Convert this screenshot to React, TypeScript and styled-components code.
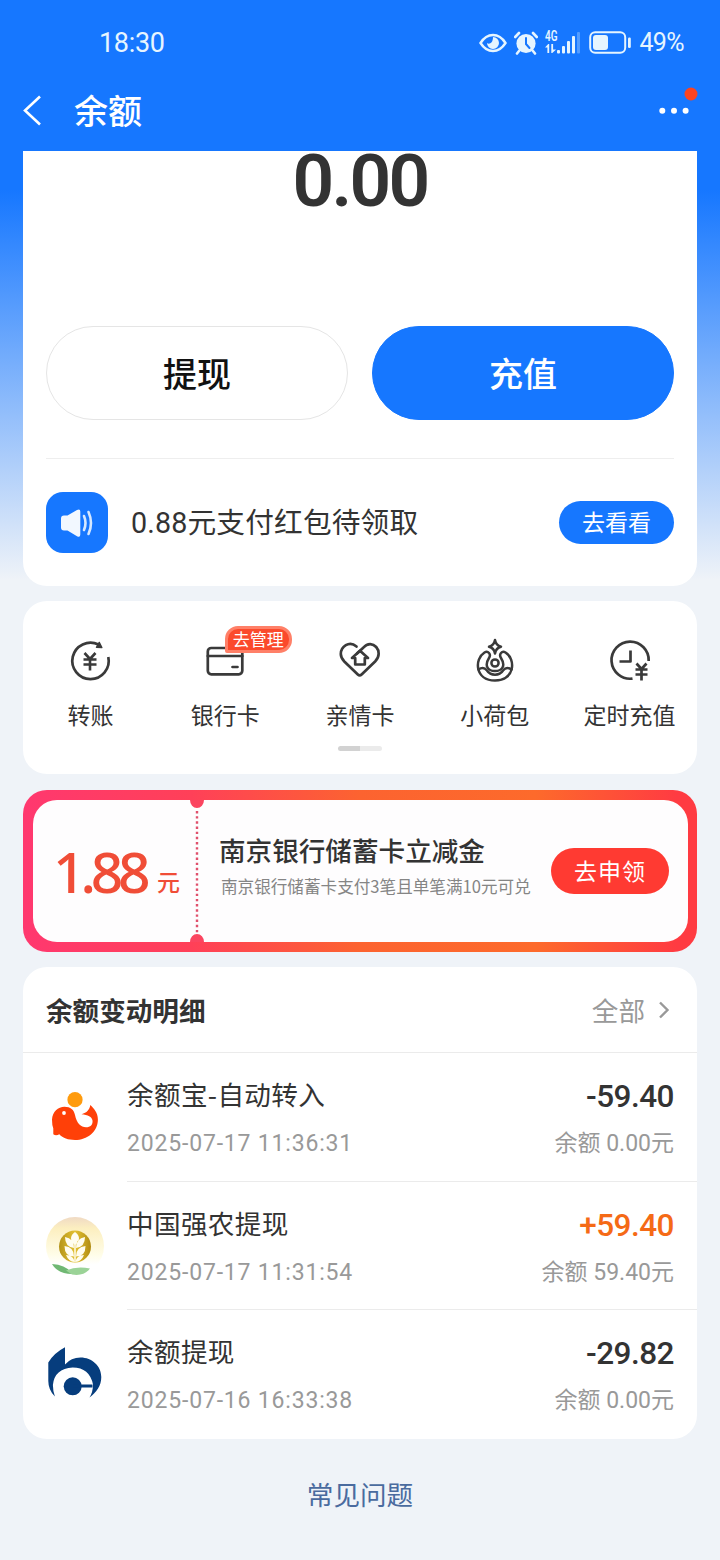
import React from 'react';
import styled, { createGlobalStyle } from 'styled-components';

const Global = createGlobalStyle`
  * { box-sizing: border-box; }
  body { margin: 0; background: #eff3f8; }
`;

const cjk = `'Noto Sans CJK SC', sans-serif`;
const digits = `Roboto, 'Noto Sans CJK SC', sans-serif`;

const Page = styled.div`
  width: 720px;
  height: 1560px;
  overflow: hidden;
  font-family: ${cjk};
  color: #333;
  background: linear-gradient(180deg, #1677ff 0, #1677ff 190px, #eff3f8 580px, #eff3f8 100%);
`;

const StatusBar = styled.div`
  height: 70px;
  padding: 15px 36px 0 99px;
  display: flex;
  align-items: center;
  justify-content: space-between;
  color: #e6f5ff;
  font: 400 27px/54px ${digits};
`;

const Clock = styled.span`
  letter-spacing: -0.3px;
`;

const StatusIcons = styled.div`
  display: flex;
  align-items: center;
`;

const Percent = styled.span`
  margin-left: 7px;
  font-size: 25px;
  letter-spacing: -0.6px;
`;

const NavBar = styled.div`
  height: 81px;
  padding: 0 20px 0 22px;
  display: flex;
  align-items: center;
  color: #fff;
`;

const NavTitle = styled.h1`
  margin: -1px auto 0 31px;
  font-size: 34px;
  font-weight: 500;
  line-height: 50px;
`;

const Main = styled.main`
  padding: 0 23px;
  display: flex;
  flex-direction: column;
`;

const Card = styled.section`
  background: #fff;
  border-radius: 24px;
`;

const BalanceCard = styled(Card)`
  height: 435px;
  border-radius: 0 0 24px 24px;
  padding: 0 23px;
`;

const Amount = styled.div`
  height: 175px;
  text-align: center;
  font: 600 73px/60px ${digits};
  letter-spacing: -2.7px;
`;

const Actions = styled.div`
  display: grid;
  grid-template-columns: 1fr 1fr;
  gap: 24px;
  padding-bottom: 38px;
  border-bottom: 1px solid #eee;
`;

const ActionButton = styled.button<{ $primary?: boolean }>`
  height: 94px;
  border-radius: 47px;
  padding: 0;
  border: 1px solid ${p => (p.$primary ? '#1677ff' : '#e5e5e5')};
  background: ${p => (p.$primary ? '#1677ff' : '#fff')};
  color: ${p => (p.$primary ? '#fff' : '#111')};
  font: 500 34px/48px ${cjk};
`;

const Notice = styled.div`
  display: flex;
  align-items: center;
  height: 127px;
`;

const NoticeIcon = styled.div`
  width: 62px;
  height: 61px;
  border-radius: 17px;
  background: #1677ff;
  display: grid;
  place-items: center;
  margin-right: 23px;
`;

const NoticeText = styled.span`
  flex: 1;
  font: 400 28.7px/40px ${digits};
  letter-spacing: 0.15px;
`;

const NoticeButton = styled.button`
  width: 115px;
  height: 43px;
  border: 0;
  padding: 0 0 3px;
  border-radius: 22px;
  background: #1677ff;
  color: #fff;
  font: 400 23px/40px ${cjk};
`;

const ServicesCard = styled(Card)`
  margin-top: 15px;
  height: 173px;
  padding-top: 34px;
`;

const ServiceGrid = styled.div`
  display: grid;
  grid-template-columns: repeat(5, 134.8px);
`;

const Service = styled.div`
  position: relative;
  display: flex;
  flex-direction: column;
  align-items: center;
  height: 110px;
`;

const ServiceLabel = styled.span`
  margin-top: 10px;
  font-size: 23px;
  line-height: 34px;
  white-space: nowrap;
`;

const ManageBadge = styled.span`
  position: absolute;
  left: 67px;
  top: -9px;
  width: 67px;
  height: 27px;
  border: 3px solid #ff8068;
  border-radius: 13px 13px 13px 2px;
  background: #fb4a2c;
  color: #fff;
  text-align: center;
  font-size: 17px;
  line-height: 19px;
`;

const PageIndicator = styled.div`
  width: 44px;
  height: 5px;
  margin: 1px auto 0;
  border-radius: 3px;
  background: linear-gradient(90deg, #d2d2d2 50%, #ebebeb 50%);
`;

const Coupon = styled.section`
  margin-top: 16px;
  height: 162px;
  padding: 10px 9px 10px 10px;
  border-radius: 24px;
  background: linear-gradient(90deg, #ff386f 0%, #ff4058 25%, #fc6330 50%, #fd6a2b 76%, #ff3b42 97%);
`;

const CouponInner = styled.div`
  position: relative;
  height: 142px;
  border-radius: 24px;
  background: #fefdfe;
  display: flex;
  align-items: center;
`;

const CouponValue = styled.div`
  width: 163px;
  padding: 0 0 0 20px;
  display: flex;
  align-items: baseline;
  color: #f04d37;
`;

const CouponNumber = styled.span`
  font: 500 57px/70px 'Noto Sans', sans-serif;
  letter-spacing: -5.2px;
  width: 104px;
`;

const CouponUnit = styled.span`
  position: relative;
  top: -2px;
  font-size: 23px;
  font-weight: 500;
`;

const Perforation = styled.svg`
  position: absolute;
  left: 156px;
  top: 0;
`;

const CouponText = styled.div`
  flex: 1;
  padding-left: 23px;
  white-space: nowrap;
`;

const CouponTitle = styled.div`
  font-size: 26.6px;
  font-weight: 500;
  line-height: 38px;
  margin-top: -12px;
`;

const CouponDesc = styled.div`
  margin: 4px 0 0 2px;
  font-size: 16.6px;
  line-height: 26px;
  color: #858585;
`;

const ApplyButton = styled.button`
  width: 118px;
  height: 46px;
  margin-right: 19px;
  border: 0;
  padding: 0 0 3px;
  border-radius: 23px;
  background: #ff3a32;
  color: #fff;
  font: 400 23px/40px ${cjk};
  letter-spacing: 1px;
`;

const HistoryCard = styled(Card)`
  margin-top: 15px;
  height: 472px;
  overflow: hidden;
`;

const HistoryHeader = styled.div`
  height: 86px;
  padding: 0 26px 0 23px;
  display: flex;
  align-items: center;
  border-bottom: 1px solid #ebebeb;
`;

const HistoryTitle = styled.h2`
  margin: 0 auto 0 0;
  font-size: 26.6px;
  font-weight: 700;
  line-height: 40px;
`;

const AllLink = styled.span`
  display: flex;
  align-items: center;
  gap: 13px;
  color: #999;
  font-size: 26.6px;
  line-height: 40px;
`;

const Entry = styled.div`
  display: grid;
  grid-template-columns: 58px 1fr;
  column-gap: 23px;
  height: 128.7px;
  padding-left: 23px;
`;

const EntryLogo = styled.div`
  padding-top: 35px;
  height: 100px;
`;

const EntryBody = styled.div`
  padding: 20px 23px 0 0;
  border-bottom: 1px solid #ebebeb;

  ${Entry}:last-child & {
    border-bottom: 0;
  }
`;

const EntryLine = styled.div`
  display: flex;
  justify-content: space-between;
`;

const EntryName = styled.span`
  font-size: 26.6px;
  line-height: 42px;
  letter-spacing: 0.35px;
`;

const EntryAmount = styled.span<{ $income?: boolean }>`
  font: 500 31.5px/48px ${digits};
  letter-spacing: -0.5px;
  color: ${p => (p.$income ? '#f56a16' : '#333')};
`;

const EntryTime = styled.span`
  font: 400 23px/46px ${digits};
  letter-spacing: 0.82px;
  color: #999;
`;

const EntryBalance = styled.span`
  font: 400 23px/46px ${digits};
  color: #999;
`;

const Faq = styled.a`
  margin-top: 34px;
  text-align: center;
  color: #4a6b9f;
  font-size: 26.6px;
  line-height: 42px;
`;

const EyeIcon = () => (
  <svg width="28" height="20" viewBox="0 0 28 20" fill="none">
    <path d="M1.500 10C5 4.500 9 2 14 2s9 2.500 12.500 8C23 15.500 19 18 14 18S5 15.500 1.500 10Z" stroke="#e6f5ff" strokeWidth="2.400" />
    <path d="M14 4a6 6 0 1 1-6 6c2 1.600 6 .5 6-6Z" fill="#e6f5ff" />
  </svg>
);

const StatusGlyph = styled.svg`
  margin-left: 7px;
`;

const AlarmIcon = () => (
  <StatusGlyph width="24" height="24" viewBox="0 0 24 24" fill="none">
    <circle cx="12" cy="12.500" r="9.600" fill="#e6f5ff" />
    <path d="M1.200 6 5 2M22.800 6 19 2M5 20l-2 2.500M19 20l2 2.500" stroke="#e6f5ff" strokeWidth="2.600" strokeLinecap="round" />
    <path d="M12 7v6l3.500 4" stroke="#1677ff" strokeWidth="2" strokeLinecap="round" />
  </StatusGlyph>
);

const SignalIcon = () => (
  <StatusGlyph width="36" height="25" viewBox="0 0 36 25" fill="#e6f5ff">
    <text x="0" y="11" fontFamily="Roboto, sans-serif" fontSize="14" fontWeight="600" textLength="12.500" lengthAdjust="spacingAndGlyphs">4G</text>
    <path d="M0 17.500 3.200 14h1v9H2.400v-5.500Zm6.300-3.500h1.800v5.500h3L7.300 23h-1Z" />
    <rect x="12" y="20" width="3" height="3.500" rx="1" />
    <rect x="17" y="16" width="3" height="7.500" rx="1" />
    <rect x="22" y="11" width="3" height="12.500" rx="1" />
    <rect x="27" y="6" width="3" height="17.500" rx="1" />
    <rect x="32" y="2" width="3" height="21.500" rx="1" opacity=".3" />
  </StatusGlyph>
);

const BatteryIcon = () => (
  <StatusGlyph width="44" height="23" viewBox="-1 0 44 23" fill="none">
    <rect x="1.200" y="1.200" width="35" height="20.500" rx="5" stroke="#e6f5ff" strokeWidth="2" />
    <rect x="4" y="4" width="15" height="15" rx="3" fill="#e6f5ff" />
    <rect x="39" y="6.500" width="2.800" height="10.500" rx="1.200" fill="#e6f5ff" />
  </StatusGlyph>
);

const BackIcon = () => (
  <svg width="21" height="32" viewBox="0 0 21 32" fill="none" stroke="#fff" strokeWidth="2.600">
    <path d="M18 1.500 3 15.500l15 14" />
  </svg>
);

const MoreIcon = () => (
  <svg width="44" height="50" viewBox="0 0 44 50" fill="#fff">
    <circle cx="6.300" cy="24.700" r="3" />
    <circle cx="18" cy="24.700" r="3" />
    <circle cx="29.600" cy="24.700" r="3" />
    <circle cx="35" cy="8" r="6.500" fill="#fb4420" />
  </svg>
);

const SpeakerIcon = () => (
  <svg width="36" height="30" viewBox="0 0 36 30" fill="none">
    <path d="M2 10.500q0-3 3-3h3.500L18 2q3.300-1.500 3.300 1.500v23Q21.300 30 18 28.300L8.500 22.500H5q-3 0-3-3Z" fill="#f2f8ff" />
    <path d="M25 8q3 7 0 14M29.500 4q5 11 0 22" stroke="#d6e8ff" strokeWidth="2.600" strokeLinecap="round" />
  </svg>
);

const iconProps = {
  width: 48,
  height: 52,
  viewBox: '0 0 48 52',
  fill: 'none',
  stroke: '#3a3a3a',
  strokeWidth: 2.7,
  strokeLinecap: 'round' as const,
  strokeLinejoin: 'round' as const,
};

const TransferIcon = () => (
  <svg {...iconProps}>
    <path d="M42.300 22A18.200 18.200 0 1 1 32.500 9.500" strokeLinecap="butt" />
    <path d="m33.300 7.500 2.500 5-5.300-.2Z" fill="#3a3a3a" strokeWidth="1.500" />
    <path d="m18.500 18 5.500 6 5.500-6M17.500 24.500h13M17.500 29.500h13M24 24V35.500" strokeWidth="2.600" strokeLinecap="butt" />
  </svg>
);

const CardIcon = () => (
  <svg {...iconProps}>
    <rect x="6.800" y="13" width="34.500" height="26.300" rx="3.500" />
    <path d="M6.800 21h34.500M31.500 32h5" />
  </svg>
);

const HeartIcon = () => (
  <svg {...iconProps}>
    <path d="M20.500 11.500C13 5 4.800 12 4.800 19c0 3 1.300 5.200 3.500 7.500l13.500 13q1.900 1.800 3.800 0l13.500-13C49 16.500 36 2.500 27.500 12.500L21 18.500" />
    <path d="m16 23 8-7.200 8 7.200h-3.200v6.500h-9.600V23Z" />
  </svg>
);

const PouchIcon = () => (
  <svg {...iconProps} strokeWidth={2.5}>
    <path d="M24 5q1 5.500 6 6.800-5 1.200-6 6.700-1-5.500-6-6.700 5-1.300 6-6.800Z" />
    <path d="M13.500 17.500C3 24 4 45.500 24 45.500S45 24 34.500 17.500c-3.500-2-7 1.500-4.500 5.500 5 8 1 13-6 13s-11-5-6-13c2.500-4-1-7.500-4.500-5.500Z" />
    <circle cx="24" cy="28" r="3.600" />
    <path d="M7.500 34.500q5-3.500 8.500 1c3.500 5.500 12.500 5.500 16 0q3.500-4.500 8.500-1" />
  </svg>
);

const TimedIcon = () => (
  <svg {...iconProps}>
    <path d="M26.500 43.600A18.600 18.600 0 1 1 42.700 26M24.500 15.500V26.500H13.500" strokeLinecap="butt" />
    <path d="m30.500 28.500 5 5.500 5-5.500M29.500 34.500h12M29.500 39.500h12M35.500 34v11.500" strokeLinecap="butt" />
  </svg>
);

const ChevronIcon = () => (
  <svg width="13" height="20" viewBox="0 0 13 20" fill="none" stroke="#999" strokeWidth="2.400">
    <path d="m2 2.500 7.500 7.500L2 17.500" />
  </svg>
);

const FishLogo = () => (
  <svg width="58" height="62" viewBox="0 0 58 62">
    <circle cx="29" cy="11.700" r="7.600" fill="#ff9b0d" />
    <path fill="#ff4008" d="M7.300 46.300V40.500Q6 37 6 31.500C6.500 23.500 12 18.700 18.500 18.700c6 0 9.500 3 10.500 8.300 1.500 8 6 12.300 11 12.300 4.500 0 7-2.800 6.500-6.800-.6-3.700-4.500-5.700-11-6.300 5.500-1.400 8-4.500 8.800-9.200 3.500 3.500 7.600 7.500 7.600 14.500C51.900 44 41 52 29 52c-7 0-12-1.700-15.700-5.700-2 1-4 1.300-6 0Z" />
    <circle cx="18" cy="25" r="1.900" fill="#fff" />
  </svg>
);

const WheatLogo = () => (
  <svg width="58" height="60" viewBox="0 0 58 60">
    <defs>
      <linearGradient id="halo" x2="0" y2="1">
        <stop offset="0" stopColor="#f0dac4" />
        <stop offset=".2" stopColor="#fcefc0" />
        <stop offset=".65" stopColor="#fffde8" />
        <stop offset=".82" stopColor="#fff" />
      </linearGradient>
      <linearGradient id="gold">
        <stop offset="0" stopColor="#b4941a" />
        <stop offset=".5" stopColor="#e3c132" />
        <stop offset="1" stopColor="#b18c12" />
      </linearGradient>
    </defs>
    <circle cx="29" cy="29" r="29" fill="url(#halo)" />
    <circle cx="29" cy="29.500" r="16" fill="url(#gold)" />
    <path fill="#fffdf0" d="M29 15q8 6 0 13-8-7 0-13ZM19 20q9 1.500 9 11-9-1-9-11ZM39 20q-9 1.500-9 11 9-1 9-11ZM18.500 29q9.500 1 9.500 10.500-9.500 0-9.500-10.500ZM39.500 29q-9.500 1-9.500 10.500 9.500 0 9.500-10.500ZM20 38q7.500 0 8.500 7-6-.5-8.500-7ZM38 38q-7.500 0-8.500 7 6-.5 8.500-7Z" />
    <path d="M29 25v20" stroke="#fffdf0" strokeWidth="1.500" />
    <path fill="#70b873" d="M6 47q15 1 20 10Q12 57 6 47Z" />
    <path fill="#9bd397" d="M20 53.500q11-5 24-2-6 8-18 6Z" />
  </svg>
);

const BankLogo = () => (
  <svg width="58" height="56" viewBox="0 0 58 56">
    <path fill="#063d7d" d="M2.300 17.500Q8 8 19 2.300V19.500Q25 12.500 34.500 12.500C46 12.500 55.300 21 55.300 32c0 9-4.800 15-11.800 20.500Q47 47 47 39.500 43.500 22.500 26.700 22.500 8.500 23.500 6.900 40q0 6 2 11.500Q2.300 45 2.300 36Z" />
    <circle cx="26.700" cy="41.300" r="9" fill="#063d7d" />
    <path d="M27 41h19.500" stroke="#063d7d" strokeWidth="3.200" />
  </svg>
);

const services = [
  { label: '转账', Icon: TransferIcon },
  { label: '银行卡', Icon: CardIcon, badge: '去管理' },
  { label: '亲情卡', Icon: HeartIcon },
  { label: '小荷包', Icon: PouchIcon },
  { label: '定时充值', Icon: TimedIcon },
];

const entries = [
  { Logo: FishLogo, name: '余额宝-自动转入', time: '2025-07-17 11:36:31', amount: '-59.40', balance: '余额 0.00元' },
  { Logo: WheatLogo, name: '中国强农提现', time: '2025-07-17 11:31:54', amount: '+59.40', balance: '余额 59.40元', income: true },
  { Logo: BankLogo, name: '余额提现', time: '2025-07-16 16:33:38', amount: '-29.82', balance: '余额 0.00元' },
];

export default function App() {
  return (
    <Page>
      <Global />
      <StatusBar>
        <Clock>18:30</Clock>
        <StatusIcons>
          <EyeIcon />
          <AlarmIcon />
          <SignalIcon />
          <BatteryIcon />
          <Percent>49%</Percent>
        </StatusIcons>
      </StatusBar>
      <NavBar>
        <BackIcon />
        <NavTitle>余额</NavTitle>
        <MoreIcon />
      </NavBar>
      <Main>
        <BalanceCard>
          <Amount>0.00</Amount>
          <Actions>
            <ActionButton>提现</ActionButton>
            <ActionButton $primary>充值</ActionButton>
          </Actions>
          <Notice>
            <NoticeIcon><SpeakerIcon /></NoticeIcon>
            <NoticeText>0.88元支付红包待领取</NoticeText>
            <NoticeButton>去看看</NoticeButton>
          </Notice>
        </BalanceCard>
        <ServicesCard>
          <ServiceGrid>
            {services.map(({ label, Icon, badge }) => (
              <Service key={label}>
                <Icon />
                {badge && <ManageBadge>{badge}</ManageBadge>}
                <ServiceLabel>{label}</ServiceLabel>
              </Service>
            ))}
          </ServiceGrid>
          <PageIndicator />
        </ServicesCard>
        <Coupon>
          <CouponInner>
            <CouponValue>
              <CouponNumber>1.88</CouponNumber>
              <CouponUnit>元</CouponUnit>
            </CouponValue>
            <Perforation width="16" height="142" viewBox="0 0 16 142" fill="#fb4560">
              <path d="M1 0a7 8 0 0 0 14 0ZM1 142a7 8 0 0 1 14 0Z" />
              <path d="M8 11v122" stroke="#e0506c" strokeWidth="2.400" strokeDasharray="2.400 2.770" />
            </Perforation>
            <CouponText>
              <CouponTitle>南京银行储蓄卡立减金</CouponTitle>
              <CouponDesc>南京银行储蓄卡支付3笔且单笔满10元可兑</CouponDesc>
            </CouponText>
            <ApplyButton>去申领</ApplyButton>
          </CouponInner>
        </Coupon>
        <HistoryCard>
          <HistoryHeader>
            <HistoryTitle>余额变动明细</HistoryTitle>
            <AllLink>全部<ChevronIcon /></AllLink>
          </HistoryHeader>
          {entries.map(({ Logo, name, time, amount, balance, income }) => (
            <Entry key={time}>
              <EntryLogo><Logo /></EntryLogo>
              <EntryBody>
                <EntryLine>
                  <EntryName>{name}</EntryName>
                  <EntryAmount $income={income}>{amount}</EntryAmount>
                </EntryLine>
                <EntryLine>
                  <EntryTime>{time}</EntryTime>
                  <EntryBalance>{balance}</EntryBalance>
                </EntryLine>
              </EntryBody>
            </Entry>
          ))}
        </HistoryCard>
        <Faq>常见问题</Faq>
      </Main>
    </Page>
  );
}
